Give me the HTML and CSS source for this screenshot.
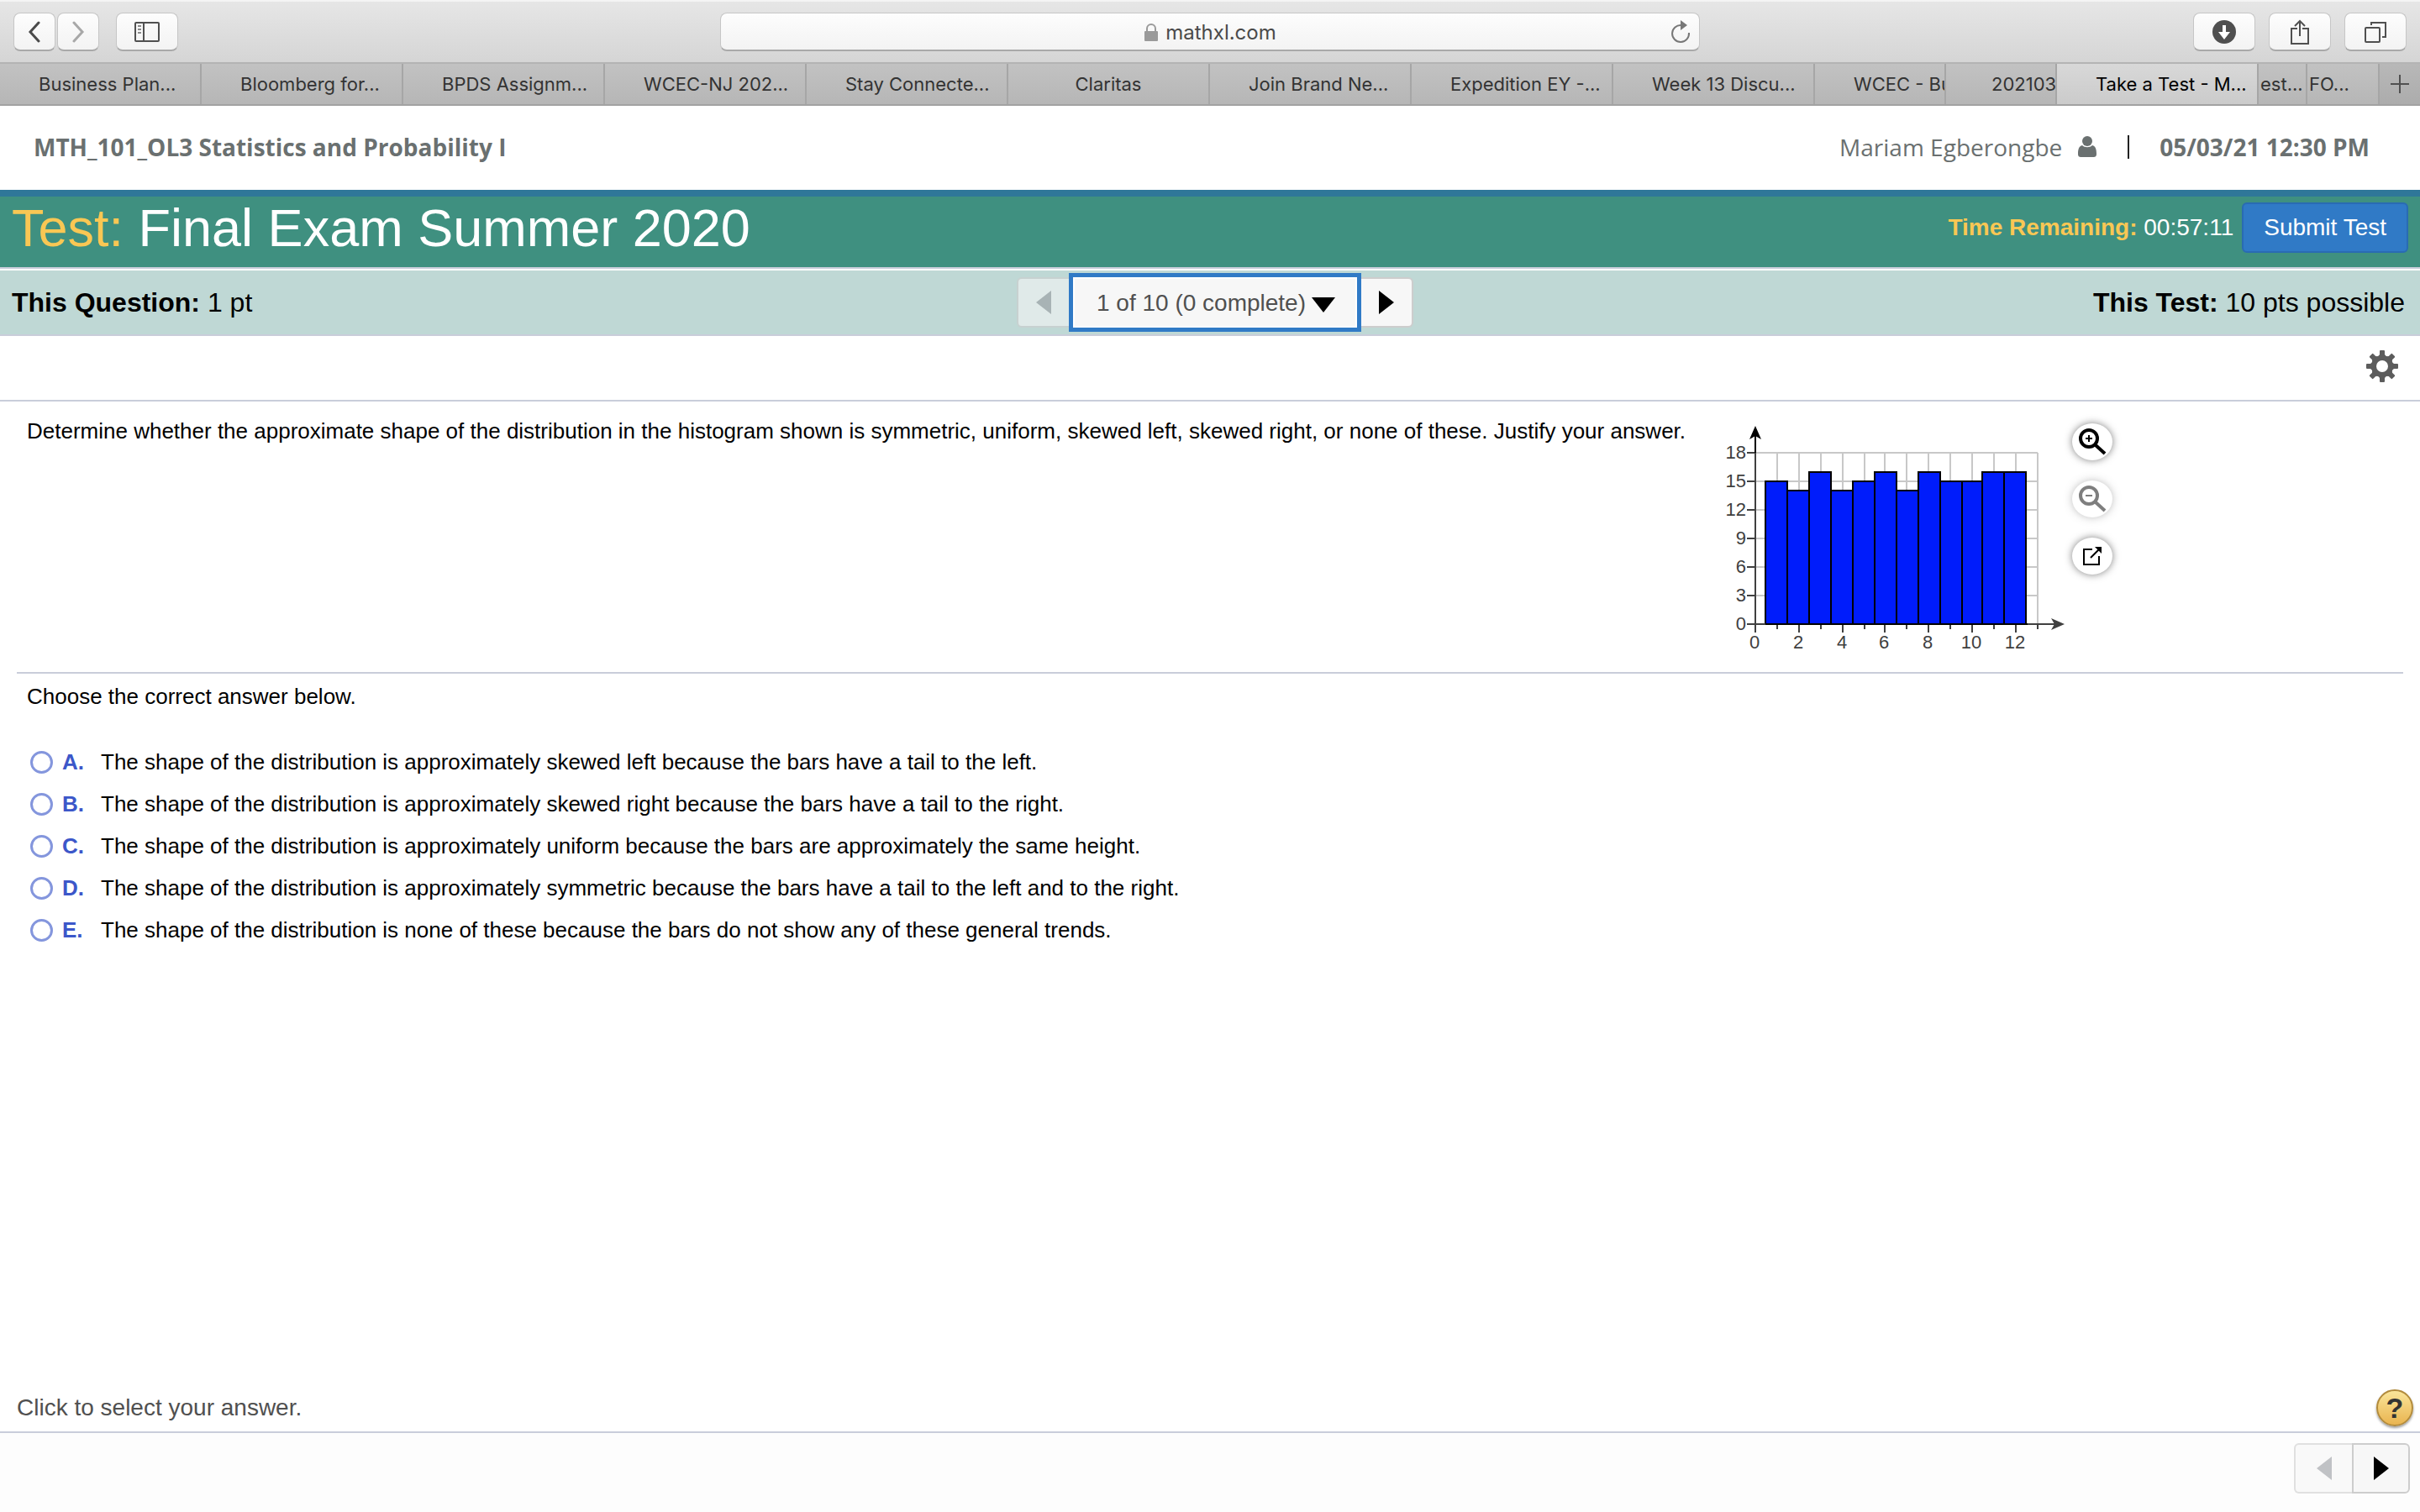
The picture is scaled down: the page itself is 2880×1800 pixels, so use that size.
FILE: index.html
```html
<!DOCTYPE html>
<html lang="en">
<head>
<meta charset="UTF-8">
<meta name="viewport" content="width=device-width, initial-scale=1.0">
<title>Take a Test - Mariam Egberongbe</title>
<link rel="stylesheet" href="styles.css">
</head>
<body>

<!-- browser toolbar -->
<div class="toolbar">
  <div class="tool-group">
    <div class="history">
      <button class="tool small" aria-label="Back"><svg width="16" height="26" viewBox="0 0 16 26"><path d="M13 2 3 13l10 11" fill="none" stroke="#4a4a4a" stroke-width="3" stroke-linecap="round"/></svg></button>
      <button class="tool small" aria-label="Forward"><svg width="16" height="26" viewBox="0 0 16 26"><path d="M3 2l10 11L3 24" fill="none" stroke="#a8a8a8" stroke-width="3" stroke-linecap="round"/></svg></button>
    </div>
    <button class="tool" aria-label="Sidebar"><svg width="30" height="24" viewBox="0 0 30 24" fill="none" stroke="#505050"><rect x="1" y="1" width="28" height="22" rx="1" stroke-width="2"/><path d="M11 1v22" stroke-width="2"/><path d="M4 5h4M4 9h4M4 13h4" stroke-width="2" stroke="#8a8a8a"/></svg></button>
  </div>
  <div class="address">
    <span class="url">
      <svg width="18" height="22" viewBox="0 0 18 22"><path d="M4 10V6a5 5 0 0 1 10 0v4" fill="none" stroke="#9a9a9a" stroke-width="2"/><rect x="1" y="9" width="16" height="12" rx="1" fill="#9a9a9a"/></svg>
      mathxl.com
    </span>
    <button class="reload" aria-label="Reload"><svg width="24" height="28" viewBox="0 0 24 28"><path d="M13 6a10 10 0 1 0 9 9" fill="none" stroke="#777" stroke-width="2"/><path d="M12 0l8 6-8 6z" fill="#777"/></svg></button>
  </div>
  <div class="tool-group right">
    <button class="tool" aria-label="Downloads"><svg width="28" height="28" viewBox="0 0 28 28"><circle cx="14" cy="14" r="14" fill="#4f4f4f"/><path d="M12 6h4v8h5l-7 9-7-9h5z" fill="#fff"/></svg></button>
    <button class="tool" aria-label="Share"><svg width="24" height="32" viewBox="0 0 24 32" fill="none" stroke="#505050" stroke-width="2"><path d="M9 12H2v18h20V12h-7M12 21V3M6 9l6-6 6 6"/></svg></button>
    <button class="tool" aria-label="Tabs"><svg width="26" height="26" viewBox="0 0 26 26" fill="none" stroke="#505050" stroke-width="2"><rect x="1" y="8" width="17" height="17" rx="1"/><path d="M8 5V2h17v17h-4"/></svg></button>
  </div>
</div>

<nav class="tabs">
  <a class="tab" href="#">Business Plan...</a>
  <a class="tab" href="#">Bloomberg for...</a>
  <a class="tab" href="#">BPDS Assignm...</a>
  <a class="tab" href="#">WCEC-NJ 202...</a>
  <a class="tab" href="#">Stay Connecte...</a>
  <a class="tab short" href="#">Claritas</a>
  <a class="tab" href="#">Join Brand Ne...</a>
  <a class="tab" href="#">Expedition EY -...</a>
  <a class="tab" href="#">Week 13 Discu...</a>
  <a class="tab" href="#">WCEC - Bu</a>
  <a class="tab behind" href="#">202103</a>
  <a class="tab active" href="#">Take a Test - M...</a>
  <a class="tab cut" href="#">est...</a>
  <a class="tab cut" href="#">FO...</a>
  <button class="new-tab" aria-label="New tab"><svg width="22" height="22" viewBox="0 0 22 22"><path d="M11 0v22M0 11h22" stroke="#505050" stroke-width="2"/></svg></button>
</nav>

<header class="course">
  <strong>MTH_101_OL3 Statistics and Probability I</strong>
  <div class="user">
    <span>Mariam Egberongbe</span>
    <svg width="24" height="26" viewBox="0 0 24 26" fill="#6a7070"><circle cx="12" cy="6" r="6"/><path d="M6 11c3 3 9 3 12 0 4 1 5 5 5 10 0 3-1 4-4 4H5c-3 0-4-1-4-4 0-5 1-9 5-10z"/></svg>
    <span class="bar"></span>
    <strong>05/03/21 12:30 PM</strong>
  </div>
</header>

<div class="title-bar">
  <h1><span class="yellow">Test:</span> Final Exam Summer 2020</h1>
  <div class="timer">
    <span><b class="yellow">Time Remaining:</b> 00:57:11</span>
    <button class="submit">Submit Test</button>
  </div>
</div>

<div class="question-bar">
  <div><b>This Question:</b> 1 pt</div>
  <div class="pager">
    <button class="prev" aria-label="Previous question" disabled><span class="arrow left"></span></button>
    <div class="picker">
      <select aria-label="Question">
        <option>1 of 10 (0 complete)</option>
      </select>
    </div>
    <button class="next" aria-label="Next question"><span class="arrow right"></span></button>
  </div>
  <div class="points"><b>This Test:</b> 10 pts possible</div>
</div>

<div class="settings">
  <button class="gear" aria-label="Settings"><svg width="40" height="40" viewBox="0 0 40 40"><g fill="#5c5c5c"><path id="tooth" d="M18 1h4q1 0 1 1v4l4 5H13l4-5V2q0-1 1-1zM18 39h4q1 0 1-1v-4l4-5H13l4 5v4q0 1 1 1z"/><use href="#tooth" transform="rotate(45 20 20)"/><use href="#tooth" transform="rotate(90 20 20)"/><use href="#tooth" transform="rotate(135 20 20)"/></g><circle cx="20" cy="20" r="10" fill="none" stroke="#5c5c5c" stroke-width="6"/></svg></button>
</div>

<main>
  <section class="question">
    <p>Determine whether the approximate shape of the distribution in the histogram shown is symmetric, uniform, skewed left, skewed right, or none of these. Justify your answer.</p>
    <svg class="histogram" width="416" height="280" viewBox="0 0 416 280" role="img" aria-label="Histogram">
      <g id="grid" stroke="#c8c8c8" stroke-width="2"></g>
      <g id="bars" fill="#001cfb" stroke="#000" stroke-width="2"></g>
      <g id="ticks" stroke="#404040" stroke-width="2"></g>
      <g id="labels" fill="#404040"></g>
      <path d="M39 243V39M39 243h362" stroke="#404040" stroke-width="2"/>
      <path d="M51 243h312" stroke="#000" stroke-width="2"/>
      <path d="M39 39V18" stroke="#000" stroke-width="2"/>
      <path d="M39 7l7 16-7-4-7 4z"/>
      <path d="M407 243l-16-7 4 7-4 7z" fill="#404040"/>
    </svg>
    <div class="figure-tools">
      <button class="round" aria-label="Zoom in"><svg width="34" height="34" viewBox="0 0 34 34" fill="none" stroke="#000"><circle cx="13" cy="13" r="10" stroke-width="4"/><path d="M21 21l11 10" stroke-width="4"/><path d="M13 9v8M9 13h8" stroke-width="2"/></svg></button>
      <button class="round" aria-label="Zoom out" disabled><svg width="34" height="34" viewBox="0 0 34 34" fill="none" stroke="#000"><circle cx="13" cy="13" r="10" stroke-width="4"/><path d="M21 21l11 10" stroke-width="4"/><path d="M9 13h8" stroke-width="2"/></svg></button>
      <button class="round" aria-label="Open in new window"><svg width="24" height="24" viewBox="0 0 24 24"><path d="M12 4H2v18h18V12M10 14L20 4" fill="none" stroke="#000" stroke-width="2"/><path d="M15 1h8v8z"/></svg></button>
    </div>
  </section>

  <form class="answers">
    <p>Choose the correct answer below.</p>
    <label><input type="radio" name="answer"><b>A.</b>The shape of the distribution is approximately skewed left because the bars have a tail to the left.</label>
    <label><input type="radio" name="answer"><b>B.</b>The shape of the distribution is approximately skewed right because the bars have a tail to the right.</label>
    <label><input type="radio" name="answer"><b>C.</b>The shape of the distribution is approximately uniform because the bars are approximately the same height.</label>
    <label><input type="radio" name="answer"><b>D.</b>The shape of the distribution is approximately symmetric because the bars have a tail to the left and to the right.</label>
    <label><input type="radio" name="answer"><b>E.</b>The shape of the distribution is none of these because the bars do not show any of these general trends.</label>
  </form>
</main>

<div class="hint">
  <span>Click to select your answer.</span>
  <button class="help" aria-label="Help">?</button>
</div>

<footer>
  <button class="prev" aria-label="Previous" disabled><span class="arrow left"></span></button>
  <button class="next" aria-label="Next"><span class="arrow right"></span></button>
</footer>

<script src="histogram.js"></script>
</body>
</html>
```
FILE: styles.css
```css
* {
  box-sizing: border-box;
}
body {
  margin: 0;
  min-height: 100vh;
  display: flex;
  flex-direction: column;
  background: #fff;
  font-family: "Liberation Sans", Arial, sans-serif;
  font-size: 28px;
  color: #000;
}
button {
  font: inherit;
  margin: 0;
  padding: 0;
  border: none;
  background: none;
}
svg {
  display: block;
}

/* browser */
.toolbar {
  height: 76px;
  padding: 0 16px;
  display: grid;
  grid-template-columns: 1fr 1166px 1fr;
  align-items: center;
  background: linear-gradient(#e6e6e6, #d5d5d5);
  border-top: 2px solid #f4f4f4;
  border-bottom: 2px solid #b4b4b4;
}
.tool-group {
  display: flex;
  gap: 20px;
}
.tool-group.right {
  justify-content: flex-end;
  gap: 16px;
}
.history {
  display: flex;
  gap: 2px;
}
.tool {
  width: 74px;
  height: 46px;
  display: flex;
  align-items: center;
  justify-content: center;
  background: linear-gradient(#fdfdfd, #f3f3f3);
  border: 1px solid #c6c6c6;
  border-bottom: 2px solid #a9a9a9;
  border-radius: 8px;
}
.tool.small {
  width: 50px;
}
.address {
  height: 46px;
  padding: 0 10px;
  display: grid;
  grid-template-columns: 1fr auto 1fr;
  align-items: center;
  background: linear-gradient(#fdfdfd, #f3f3f3);
  border: 1px solid #c6c6c6;
  border-bottom: 2px solid #a9a9a9;
  border-radius: 8px;
  font: 24px Inter, sans-serif;
  color: #4a4a4a;
}
.url {
  grid-column: 2;
  padding-top: 2px;
  display: flex;
  align-items: center;
  gap: 8px;
}
.reload {
  justify-self: end;
}
.tabs {
  height: 50px;
  display: grid;
  grid-template-columns: repeat(9, 240fr) 156fr 132fr 240fr 58fr 86fr 48fr;
  background: linear-gradient(#c2c2c2, #b6b6b6);
  border-bottom: 2px solid #a2a2a2;
  font: 22px/48px Inter, sans-serif;
}
.tab {
  min-width: 0;
  padding-left: 46px;
  border-right: 2px solid #a6a6a6;
  overflow: hidden;
  white-space: nowrap;
  color: #333;
  text-decoration: none;
}
.tab.short {
  padding: 0;
  text-align: center;
}
.tab.behind {
  padding-left: 54px;
}
.tab.active {
  background: linear-gradient(#d8d8d8, #cbcbcb);
  color: #000;
}
.tab.cut {
  padding-left: 2px;
}
.new-tab {
  display: flex;
  align-items: center;
  justify-content: center;
  background: linear-gradient(#b8b8b8, #acacac);
}

/* course header */
.course {
  height: 100px;
  padding: 0 60px 2px 40px;
  display: flex;
  align-items: center;
  justify-content: space-between;
  font-family: "Open Sans", sans-serif;
  color: #6a7070;
}
.user {
  display: flex;
  align-items: center;
  gap: 18px;
}
.bar {
  width: 2px;
  height: 28px;
  margin: 0 18px;
  background: #222;
}
.yellow {
  color: #f9c754;
}
.title-bar {
  height: 94px;
  padding: 0 14px 10px;
  display: flex;
  align-items: center;
  justify-content: space-between;
  background: #3f9080;
  border-top: 8px solid #2f7799;
  border-bottom: 2px solid #c9cdda;
  color: #fff;
}
h1 {
  margin: 0;
  font-size: 63px;
  font-weight: normal;
}
.timer {
  display: flex;
  align-items: center;
  gap: 10px;
}
.submit {
  height: 60px;
  padding: 0 24px;
  background: #307ac6;
  border: 2px solid #296bb3;
  border-radius: 6px;
  color: #fff;
}
.question-bar {
  height: 78px;
  margin-top: 2px;
  padding: 0 18px 0 14px;
  display: grid;
  grid-template-columns: 1fr auto 1fr;
  align-items: center;
  background: #bfd8d5;
  border-bottom: 2px solid #c9cdda;
  font-size: 32px;
}
.points {
  text-align: right;
}

/* question pager */
.pager {
  margin-left: 16px;
  display: flex;
  align-items: center;
}
.prev,
.next {
  width: 62px;
  height: 60px;
  display: flex;
  align-items: center;
  justify-content: center;
  background: #f7f7f7;
  border: 2px solid #cdcdcd;
}
.prev {
  border-radius: 6px 0 0 6px;
  border-right: none;
}
.next {
  border-radius: 0 6px 6px 0;
}
.pager .next {
  border-left: none;
}
.prev:disabled {
  opacity: .6;
}
.arrow {
  border: 14px solid transparent;
}
.arrow.left {
  border-left: none;
  border-right: 18px solid #999ba1;
}
.arrow.right {
  border-right: none;
  border-left: 18px solid #000;
}
.picker {
  position: relative;
}
.picker select {
  display: block;
  width: 348px;
  height: 70px;
  padding: 0 28px;
  appearance: none;
  background: #f7f7f7;
  border: 5px solid #307ac6;
  border-radius: 0;
  box-shadow: inset 0 0 0 2px #fff;
  font: 28px "Liberation Sans", Arial, sans-serif;
  color: #505050;
}
.picker::after {
  content: "";
  position: absolute;
  top: 29px;
  right: 31px;
  border: 14px solid transparent;
  border-top: 18px solid #000;
  border-bottom: none;
  pointer-events: none;
}
.settings {
  height: 78px;
  padding: 0 25px 4px;
  display: flex;
  align-items: center;
  justify-content: flex-end;
  border-bottom: 2px solid #c9cdda;
}

/* question */
main {
  flex: 1;
  padding: 0 20px;
  font-size: 26px;
}
main p {
  margin: 0;
  line-height: 30px;
}
.question {
  height: 324px;
  padding: 20px 12px 0;
  display: flex;
  align-items: flex-start;
  border-bottom: 2px solid #c9cdda;
}
.histogram {
  flex: none;
  margin: 2px 0 0 44px;
  font-size: 22px;
}
.figure-tools {
  margin-top: 6px;
  display: flex;
  flex-direction: column;
  gap: 24px;
}
.round {
  width: 48px;
  height: 44px;
  display: flex;
  align-items: center;
  justify-content: center;
  background: #fff;
  border-radius: 50%;
  box-shadow: 0 0 10px rgba(0, 0, 0, .5);
}
.round:disabled {
  opacity: .5;
}
.answers {
  padding: 12px;
}
.answers p {
  margin-bottom: 38px;
}
.answers label {
  height: 50px;
  display: flex;
  align-items: center;
}
.answers input {
  width: 27px;
  height: 27px;
  margin: 0 11px 0 4px;
  appearance: none;
  background: #fff;
  border: 3px solid #8496dd;
  border-radius: 50%;
}
.answers b {
  width: 46px;
  color: #3c57c9;
}

/* bottom of the page */
.hint {
  height: 58px;
  padding: 0 8px 0 20px;
  display: flex;
  align-items: center;
  justify-content: space-between;
  border-bottom: 2px solid #c9cdda;
  color: #505050;
}
.help {
  width: 44px;
  height: 44px;
  background: linear-gradient(#fae59a, #e9b450);
  border: 2px solid #b28b3c;
  border-radius: 50%;
  box-shadow: 0 2px 3px rgba(0, 0, 0, .4);
  font-size: 34px;
  font-weight: bold;
  line-height: 40px;
  color: #333;
}
footer {
  height: 94px;
  padding: 12px 12px 0;
  display: flex;
  justify-content: flex-end;
  background: #fdfdfd;
}
footer .prev,
footer .next {
  width: 69px;
}
```
FILE: histogram.js
```js
const svgNS = 'http://www.w3.org/2000/svg';
const values = [15, 14, 16, 14, 15, 16, 14, 16, 15, 15, 16, 16];
const left = 39;
const bottom = 243;

function add(group, name, attrs, text) {
  const el = document.createElementNS(svgNS, name);
  for (const key in attrs) el.setAttribute(key, attrs[key]);
  if (text !== undefined) el.textContent = text;
  document.getElementById(group).appendChild(el);
}

const px = n => left + Math.round(n * 12.9) * 2;
const py = n => bottom - Math.round(n * 34 / 3);

for (let x = 1; x <= 13; x++) {
  add('grid', 'path', { d: `M${px(x)} ${bottom}V${py(18)}` });
}
for (let x = 0; x <= 13; x++) {
  add('ticks', 'path', { d: `M${px(x)} ${bottom}v${x % 2 ? 6 : 10}` });
  if (x % 2 === 0) {
    add('labels', 'text', { x: px(x) - 1, y: 272, 'text-anchor': 'middle' }, x);
  }
}
for (let y = 0; y <= 18; y += 3) {
  if (y > 0) add('grid', 'path', { d: `M${left} ${py(y)}H${px(13)}` });
  add('ticks', 'path', { d: `M${left} ${py(y)}h-10` });
  add('labels', 'text', { x: 28, y: py(y) + 7, 'text-anchor': 'end' }, y);
}

// each bar is centred on its value
values.forEach((v, i) => {
  const x = px(i + 0.5);
  add('bars', 'rect', { x: x, y: py(v), width: px(i + 1.5) - x, height: bottom - py(v) });
});
```
